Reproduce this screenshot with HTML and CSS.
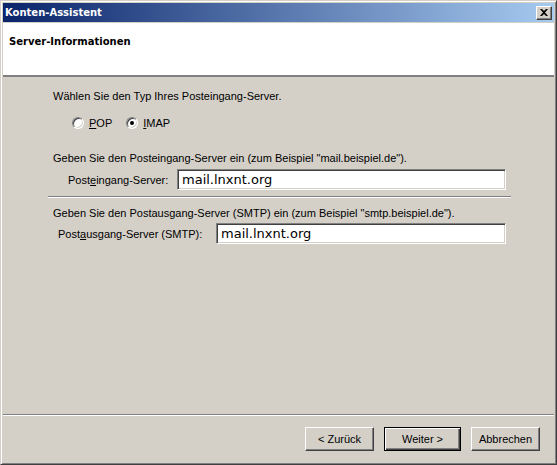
FILE: index.html
```html
<!DOCTYPE html>
<html>
<head>
<meta charset="utf-8">
<link rel="stylesheet" href="styles.css">
</head>
<body>
<div class="window">
  <div class="titlebar">
    <span class="title">Konten-Assistent</span>
    <span class="close">
      <svg width="8" height="7" viewBox="0 0 8 7"><path d="M0 0h2l2 2 2-2h2L5 3.5 8 7H6L4 5 2 7H0l3-3.5z" fill="#000"/></svg>
    </span>
  </div>
  <div class="header">
    <div class="header-title">Server-Informationen</div>
  </div>
  <div class="content">
    <p class="line first">Wählen Sie den Typ Ihres Posteingang-Server.</p>
    <div class="radios">
      <label class="radio"><span class="dot"></span><span><u>P</u>OP</span></label>
      <label class="radio"><span class="dot checked"></span><span><u>I</u>MAP</span></label>
    </div>
    <p class="line second">Geben Sie den Posteingang-Server ein (zum Beispiel "mail.beispiel.de").</p>
    <div class="field in">
      <span class="label">Post<u>e</u>ingang-Server:</span>
      <div class="input">mail.lnxnt.org</div>
    </div>
    <div class="sep"></div>
    <p class="line third">Geben Sie den Postausgang-Server (SMTP) ein (zum Beispiel "smtp.beispiel.de").</p>
    <div class="field out">
      <span class="label">Post<u>a</u>usgang-Server (SMTP):</span>
      <div class="input">mail.lnxnt.org</div>
    </div>
  </div>
  <div class="footer">
    <div class="btn">&lt; Zurück</div>
    <div class="btn default">Weiter &gt;</div>
    <div class="btn">Abbrechen</div>
  </div>
</div>
</body>
</html>
```
FILE: styles.css
```css
html, body { margin: 0; padding: 0; background: #d4d0c8; }
body { font-family: "Liberation Sans", Arial, sans-serif; font-size: 11px; color: #000; }
.window {
  width: 557px; height: 465px; box-sizing: border-box;
  background: #d4d0c8;
  border-top: 1px solid #d4d0c8; border-left: 1px solid #d4d0c8;
  border-right: 1px solid #404040; border-bottom: 1px solid #404040;
  box-shadow: inset 1px 1px 0 #ffffff, inset -1px -1px 0 #808080;
  padding: 2px;
  display: flex; flex-direction: column;
}
.titlebar {
  height: 19px; flex: none; box-sizing: border-box;
  background: linear-gradient(to right, #0a246a, #a6caf0);
  display: flex; align-items: center; justify-content: space-between;
  padding: 0 2px;
}
.title { color: #fff; font-weight: bold; font-family: "DejaVu Sans", sans-serif; font-size: 10px; }
.close {
  width: 16px; height: 14px; box-sizing: border-box; background: #d4d0c8;
  border-top: 1px solid #fff; border-left: 1px solid #fff;
  border-right: 1px solid #404040; border-bottom: 1px solid #404040;
  box-shadow: inset -1px -1px 0 #808080;
  display: flex; align-items: center; justify-content: center;
}
.header {
  background: #fff; height: 54px; flex: none; margin-top: 1px;
  border-bottom: 2px solid #808080;
  box-sizing: border-box;
}
.header-title { font-weight: bold; font-family: "DejaVu Sans", sans-serif; font-size: 10px; padding: 13px 0 0 6px; }
.content { flex: 1; padding-left: 50px; padding-right: 48px; }
.line { margin: 0; }
.first { margin-top: 13px; }
.radios { display: flex; gap: 14px; margin-top: 15px; padding-left: 19px; }
.radio { display: flex; align-items: center; gap: 5px; }
.dot {
  width: 12px; height: 12px; border-radius: 50%; box-sizing: border-box; background: #fff;
  border: 1px solid; border-color: #808080 #fff #fff #808080;
  box-shadow: inset 1px 1px 0 #404040, inset -1px -1px 0 #d4d0c8;
  position: relative;
}
.dot.checked::after {
  content: ""; position: absolute; left: 3px; top: 3px; width: 4px; height: 4px; border-radius: 50%; background: #000;
}
.second { margin-top: 23px; }
.field { display: flex; align-items: center; margin-top: 5px; }
.in { padding-left: 15px; }
.in .label { width: 109px; }
.out { padding-left: 5px; margin-top: 4px; }
.out .label { width: 158px; }
.input {
  flex: 1; height: 21px; box-sizing: border-box; background: #fff;
  border: 1px solid; border-color: #808080 #fff #fff #808080;
  box-shadow: inset 1px 1px 0 #404040, inset -1px -1px 0 #d4d0c8;
  font-family: "DejaVu Sans", sans-serif; font-size: 13px;
  padding: 2px 4px; line-height: 16px;
}
.sep { height: 0; border-top: 1px solid #808080; border-bottom: 1px solid #fff; margin: 6px -5px 0 -5px; }
.third { margin-top: 9px; }
.footer {
  height: 48px; flex: none; box-sizing: border-box;
  border-top: 1px solid #808080; box-shadow: inset 0 1px 0 #fff;
  display: flex; justify-content: flex-end; align-items: flex-start; gap: 10px;
  padding: 12px 14px 0 0;
}
.btn {
  width: 69px; height: 24px; box-sizing: border-box;
  border: 1px solid; border-color: #fff #404040 #404040 #fff;
  box-shadow: inset -1px -1px 0 #808080;
  display: flex; align-items: center; justify-content: center;
}
.btn.default {
  width: 77px; border: 1px solid #000;
  box-shadow: inset 1px 1px 0 #fff, inset -1px -1px 0 #404040, inset -2px -2px 0 #808080;
}
```
